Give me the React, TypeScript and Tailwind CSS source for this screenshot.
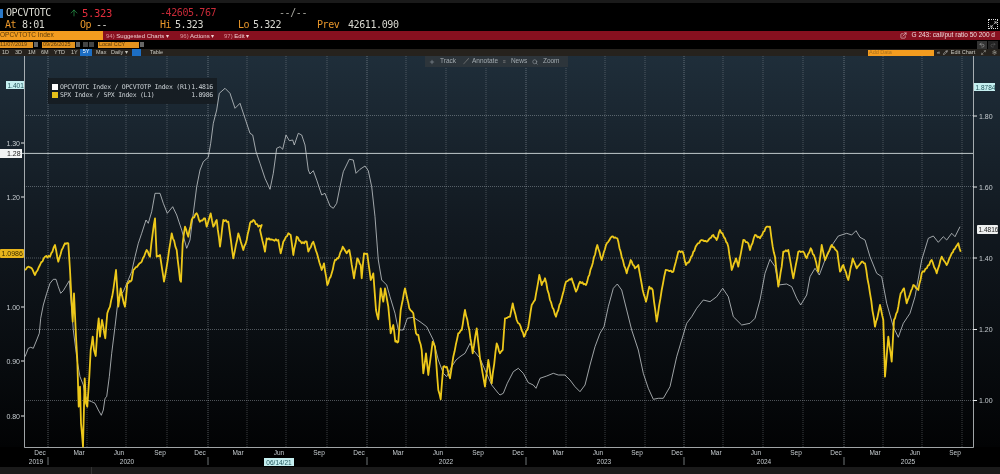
import { ArrowUp, Pencil, Settings, Undo2, Redo2, ExternalLink, Plus, Search, Maximize2 } from 'lucide-react';

type Trace = [number, number, number[]];

// traced in crops: [offset x, offset y, zoomed x/y pairs], zoom factor 3
const whiteTraces: Trace[] = [
  [0, 270, [75,260, 85,235, 92,232, 100,235, 110,210, 118,190, 122,145, 130,105, 140,70, 150,40, 160,28, 168,28, 175,50, 182,70, 190,62, 200,45, 208,32, 220,180, 232,275, 240,320, 250,345, 255,375, 262,390, 275,395, 285,400, 295,420, 304,436, 310,420, 315,385, 320,380, 328,320, 335,250, 345,170, 352,110, 358,80, 370,65]],
  [0, 80, [395,575, 405,530, 415,490, 425,460, 438,420, 445,430, 455,395, 465,340, 480,340, 490,370, 502,400, 518,380, 530,405, 545,450, 560,505, 570,480, 580,400, 590,320, 600,270, 610,245, 625,232, 632,190, 640,130, 650,90, 658,40, 675,25, 690,40, 705,85, 720,70, 735,115]],
  [250, 80, [0,160, 8,165, 18,215, 30,250, 45,295, 60,328, 70,280, 80,205, 90,200, 98,208, 108,165, 118,182, 128,180, 133,195, 145,160, 155,165, 165,195, 175,270, 180,282, 190,272, 200,300, 215,345, 225,340, 240,378, 250,385, 260,370, 270,320, 280,275, 298,238, 310,240, 318,280, 330,268, 345,258, 355,272, 365,320, 375,410]],
  [250, 230, [378,0, 385,90, 395,150, 410,165, 420,200, 435,250, 445,300, 460,300, 472,265, 490,262, 510,275, 530,290, 550,330, 565,390, 580,430, 590,440, 605,410, 618,390, 630,380, 645,370, 660,340, 670,360, 690,385, 705,420, 725,465, 745,490]],
  [500, 210, [0,555, 10,550, 22,520, 40,485, 55,475, 70,490, 85,518, 100,525, 108,535, 120,505, 140,498, 160,490, 175,495, 195,495, 210,510, 225,530, 240,545, 255,525, 270,465, 285,410, 300,370, 312,350, 325,290, 340,235, 352,222, 365,240, 380,300, 395,360, 415,420, 430,490, 445,535, 460,568, 475,565, 490,565, 510,530, 530,440, 545,390, 560,340, 575,320, 590,295, 610,270, 630,275, 650,260, 668,235, 685,260, 700,320, 725,345]],
  [750, 210, [0,340, 15,325, 30,270, 45,190, 60,148, 75,170, 85,225, 110,222, 125,230, 140,265, 152,285, 170,255, 180,200, 195,175, 208,195, 225,150, 250,100, 265,78, 290,70, 305,75, 318,62, 330,82, 345,90, 360,140, 380,190, 395,200, 410,280, 430,350, 445,382, 460,340, 480,310, 495,260, 515,150, 535,85, 550,78, 565,97, 580,80, 590,90, 605,70, 615,80, 630,50]],
];

const yellowTraces: Trace[] = [
  [0, 80, [75,570, 85,560, 95,565, 105,585, 120,555, 135,530, 150,530, 165,495, 175,545, 185,510, 195,490, 205,490, 210,570]],
  [0, 270, [215,100, 218,155, 222,70, 228,200, 232,270, 236,410, 240,350, 243,460, 249,530, 254,325, 258,400, 262,410, 268,320, 272,240, 278,200, 282,240, 287,258, 292,185, 296,145, 300,200, 306,150, 316,205, 322,130, 330,110, 340,60, 348,0, 355,110, 362,55, 368,85, 375,110, 382,40, 395,30, 400,0]],
  [0, 80, [415,555, 425,545, 440,510, 450,530, 458,460, 465,415, 470,530, 480,525, 490,590, 492,605, 500,560, 515,460, 530,510, 540,600, 543,605, 548,490, 555,440, 565,470, 575,420, 590,400, 600,425, 615,415, 620,440, 632,400, 640,440, 650,420, 660,500, 670,420, 685,425, 700,535, 715,460, 730,510, 740,480]],
  [250, 80, [0,430, 10,420, 25,440, 35,435]],
  [250, 230, [30,0, 45,65, 50,25, 70,30, 85,30, 92,70, 100,35, 115,10, 122,15, 130,75, 140,20, 155,40, 170,35, 175,65, 190,35, 205,85, 215,120, 222,100, 232,165, 245,130, 255,90, 265,85, 278,50, 290,70, 298,60, 312,145, 322,85, 332,105, 335,145, 342,70, 352,72, 362,150, 370,130, 378,240, 385,268, 392,175, 400,215, 405,175, 415,230, 422,310, 430,285, 436,335, 445,335, 452,240, 465,175, 478,235, 490,250, 498,310, 505,315, 515,360, 520,430, 528,370, 535,435, 548,335, 555,350, 565,480, 572,508, 580,410, 590,410, 600,445, 610,380, 625,310, 635,300, 645,240, 658,300, 668,370, 680,295, 690,385, 705,470, 715,390, 725,460, 740,340]],
  [500, 210, [0,430, 8,420, 15,325, 30,320, 38,280, 50,330, 62,350, 72,380, 85,350, 95,285, 105,270, 118,195, 125,225, 135,205, 150,270, 168,320, 185,265, 198,215, 215,205, 228,245, 240,215, 258,225, 275,170, 292,105, 305,150, 318,105, 335,80, 352,85, 365,140, 380,190, 392,150, 405,175, 415,165, 428,240, 438,275, 448,230, 458,240, 470,335, 485,240, 497,180, 520,185, 535,125, 548,125, 558,165, 570,150, 590,105, 605,90, 620,95, 640,75, 650,90, 660,60, 675,85, 685,110, 695,180, 708,145, 715,170, 730,90, 745,100]],
  [750, 210, [0,120, 15,75, 30,85, 50,50, 60,50, 68,110, 75,140, 85,230, 95,170, 100,125, 115,120, 130,205, 145,125, 160,125, 170,145, 182,115, 195,145, 205,185, 215,105, 225,150, 245,105, 262,125, 270,185, 280,165, 295,210, 308,145, 320,175, 335,155, 345,160, 360,250, 375,350, 385,310, 390,285, 400,330, 405,500, 415,380, 425,455, 432,330, 442,305, 452,250, 462,235, 470,280, 490,225, 505,240, 515,190, 530,175, 545,150, 560,190, 575,140, 590,165, 605,130, 625,100, 632,125]],
];

function toPoints(traces: Trace[]) {
  const pts: [number, number][] = [];
  traces.forEach(([ox, oy, d]) => {
    for (let i = 0; i < d.length; i += 2) pts.push([ox + d[i] / 3, oy + d[i + 1] / 3]);
  });
  return pts;
}

// small zigzag so the long straight bits look like daily prices
function roughen(pts: [number, number][], amp: number) {
  const out: [number, number][] = [];
  pts.forEach((p, i) => {
    out.push(p);
    const n = pts[i + 1];
    if (!n) return;
    const steps = Math.max(1, Math.round(Math.abs(n[0] - p[0]) / 1.2));
    for (let k = 1; k < steps; k++) {
      const t = k / steps;
      const off = Math.sin(i * 12.9898 + k * 78.233) * amp;
      out.push([p[0] + (n[0] - p[0]) * t, p[1] + (n[1] - p[1]) * t + off]);
    }
  });
  return out;
}

const pathOf = (pts: [number, number][]) => pts.map((p) => `${p[0].toFixed(1)},${p[1].toFixed(1)}`).join(' ');

const vGrid = [48, 87, 126, 167, 208, 247, 286, 327, 367, 406, 446, 486, 526, 566, 605, 645, 684, 723, 763, 803, 844, 883, 922, 962];
const yearLines = [48, 208, 367, 526, 684, 844];
const hGrid = [115.5, 186.5, 258, 329.5, 400.5];
const months = ['Dec', 'Mar', 'Jun', 'Sep'];
const monthX = [40, 79, 119, 160, 200, 238, 279, 319, 359, 398, 438, 478, 518, 558, 598, 637, 677, 716, 756, 796, 836, 875, 915, 955];
const years: [string, number][] = [['2019', 36], ['2020', 127], ['2022', 446], ['2023', 604], ['2024', 764], ['2025', 908]];
const leftLabels: [string, number][] = [['1.30', 143], ['1.20', 197], ['1.00', 307], ['0.90', 361], ['0.80', 416]];
const rightLabels: [string, number][] = [['1.80', 116], ['1.60', 187], ['1.40', 258], ['1.20', 329.5], ['1.00', 400.5]];
const ranges = [['1D', 'w-[13px]'], ['3D', 'w-[13px]'], ['1M', 'w-[13px]'], ['6M', 'w-[13px]'], ['YTD', 'w-[17px]'], ['1Y', 'w-[9px]']];

function Chart() {
  const white = toPoints(whiteTraces);
  const yellow = roughen(toPoints(yellowTraces), 0.8);
  return (
    <svg viewBox="0 56 1000 411" className="block w-[1000px] h-[411px] font-['Liberation_Sans',sans-serif]">
      <defs>
        <linearGradient id="plotBg" x1="0" y1="0" x2="0" y2="1">
          <stop offset="0" stopColor="#1f2e3a" />
          <stop offset="0.45" stopColor="#11181f" />
          <stop offset="1" stopColor="#020304" />
        </linearGradient>
      </defs>
      <rect x="0" y="56" width="1000" height="391" fill="url(#plotBg)" />
      <rect x="0" y="447" width="1000" height="20" fill="#000" />

      {hGrid.map((y) => (
        <line key={y} x1="24" x2="973" y1={y} y2={y} stroke="#aeb8be" strokeOpacity="0.55" strokeWidth="0.8" strokeDasharray="1 1" />
      ))}
      {vGrid.map((x) => (
        <line key={x} x1={x} x2={x} y1="56" y2="447" stroke="#aeb8be" strokeOpacity={yearLines.includes(x) ? 0.6 : 0.42} strokeWidth="0.8" strokeDasharray="1 1" />
      ))}

      {/* axes */}
      <path d="M24.5 56V447.5H973.5V56" fill="none" stroke="#c9ced1" strokeWidth="0.8" />
      <line x1="0" x2="973" y1="153.4" y2="153.4" stroke="#d5dcdf" strokeWidth="0.9" />

      <polyline points={pathOf(white)} fill="none" stroke="#c4c9cc" strokeWidth="0.8" strokeLinejoin="round" />
      <polyline points={pathOf(yellow)} fill="none" stroke="#edc81a" strokeWidth="1.8" strokeLinejoin="round" />

      {/* left scale */}
      {leftLabels.map(([t, y]) => (
        <g key={t}>
          <line x1="21" x2="24" y1={y} y2={y} stroke="#e5e7e8" strokeWidth="1" />
          <text x="20" y={y + 2.5} textAnchor="end" fontSize="7" fill="#c6ccd0">{t}</text>
        </g>
      ))}
      <rect x="6" y="81" width="18" height="8" fill="#c5eff0" />
      <text x="7.5" y="87.5" fontSize="6.5" fill="#24565c">1.401</text>
      <rect x="0" y="149" width="22" height="9" fill="#f2f4f4" />
      <text x="7" y="156" fontSize="7" fill="#222">1.28</text>
      <rect x="0" y="249" width="24" height="9" rx="1" fill="#e8b51c" />
      <text x="1.5" y="256" fontSize="7" fill="#3b2d00">1.0986</text>

      {/* right scale */}
      {rightLabels.map(([t, y]) => (
        <g key={t}>
          <line x1="973" x2="977" y1={y} y2={y} stroke="#e5e7e8" strokeWidth="1" />
          <text x="979" y={y + 2.5} fontSize="7" fill="#c6ccd0">{t}</text>
        </g>
      ))}
      <rect x="974" y="83" width="21" height="8" fill="#c5eff0" />
      <text x="975.5" y="89.5" fontSize="6.5" fill="#24565c">1.8784</text>
      <rect x="977" y="225" width="21" height="9" rx="1" fill="#eef0f0" />
      <text x="978.5" y="232" fontSize="6.5" fill="#222">1.4816</text>

      {/* time axis */}
      {monthX.map((x, i) => (
        <text key={x} x={x} y="455" textAnchor="middle" fontSize="6.5" fill="#c6ccd0">{months[i % 4]}</text>
      ))}
      {years.map(([t, x]) => (
        <text key={t} x={x} y="464" textAnchor="middle" fontSize="6.5" fill="#c6ccd0">{t}</text>
      ))}
      {yearLines.map((x) => (
        <line key={x} x1={x} x2={x} y1="457" y2="465" stroke="#8c9296" strokeWidth="0.8" />
      ))}
      <rect x="264" y="458" width="30" height="8" fill="#c5eff0" />
      <text x="279" y="464.5" textAnchor="middle" fontSize="6.5" fill="#24565c">06/14/21</text>
    </svg>
  );
}

export default function App() {
  return (
    <div className="w-[1000px] h-[474px] overflow-hidden bg-black flex flex-col blur-[0.3px]">
      <div className="h-[3px] bg-[#1a1a1a]" />

      {/* quote lines */}
      <div className="h-[28px] pt-[4px] relative font-['DejaVu_Sans_Mono',monospace] text-[10px] leading-[12px] tracking-[-0.4px] text-[#d8d8d0]">
        <div className="flex h-[12px] items-center">
          <div className="w-[3px] h-[9px] bg-[#2a78c8] mr-[3px]" />
          <span className="w-[66px]">OPCVTOTC</span>
          <ArrowUp size={10} strokeWidth={1.5} className="shrink-0 -ml-[3px] mr-[3px] text-[#2fae55]" />
          <span className="w-[78px] text-[10.5px] tracking-[-0.3px] text-[#e22d3c]">5.323</span>
          <span className="w-[119px] text-[#c72a38]">-42605.767</span>
          <span className="text-[#a8a8a0]">--/--</span>
        </div>
        <div className="flex h-[12px] items-center pl-[5px]">
          <span className="w-[17px] text-[#e8962a]">At</span>
          <span className="w-[58px]">8:01</span>
          <span className="w-[16px] text-[#e8962a]">Op</span>
          <span className="w-[64px]">--</span>
          <span className="w-[15px] text-[#e8962a]">Hi</span>
          <span className="w-[63px]">5.323</span>
          <span className="w-[15px] text-[#e8962a]">Lo</span>
          <span className="w-[64px]">5.322</span>
          <span className="w-[31px] text-[#e8962a]">Prev</span>
          <span>42611.090</span>
        </div>
        <div className="absolute right-[2px] top-[16px] w-[10px] h-[10px] border border-dotted border-[#ddd] flex items-center justify-center">
          <Maximize2 size={7} className="text-white" />
        </div>
      </div>

      {/* red command bar */}
      <div className="h-[9px] bg-[#87101f] flex items-center font-['Liberation_Sans',sans-serif] text-[6px] leading-none text-[#eecfd2]">
        <div className="w-[103px] h-full bg-[#f39c1f] text-[#5a3a08] text-[6.5px] flex items-center">OPCVTOTC Index</div>
        <span className="w-[74px] pl-[3px]"><span className="text-[#d9949c]">94)</span> Suggested Charts ▾</span>
        <span className="w-[44px] pl-[3px]"><span className="text-[#d9949c]">96)</span> Actions ▾</span>
        <span className="pl-[3px]"><span className="text-[#d9949c]">97)</span> Edit ▾</span>
        <div className="ml-auto flex items-center gap-[5px] pr-[5px] text-[6.5px] text-[#f0d8da]">
          <ExternalLink size={7} />
          <span>G 243: call/put ratio 50 200 d</span>
        </div>
      </div>

      {/* dates */}
      <div className="h-[9px] flex items-center gap-[1px] font-['Liberation_Sans',sans-serif] text-[5.5px] leading-none text-[#5a3a08]">
        <div className="w-[33px] h-[6px] bg-[#e3931f] flex items-center">11/07/2019</div>
        <div className="w-[4px] h-[5px] bg-[#666] mr-[3px]" />
        <div className="w-[33px] h-[6px] bg-[#e3931f] flex items-center pl-[1px]">09/26/2025</div>
        <div className="w-[4px] h-[5px] bg-[#666]" />
        <div className="w-[5px] h-[5px] bg-[#444] ml-[2px]" />
        <div className="w-[5px] h-[5px] bg-[#444] mr-[3px]" />
        <div className="w-[41px] h-[6px] bg-[#e3931f] flex items-center pl-[1px]">Local CCY</div>
        <div className="w-[4px] h-[5px] bg-[#666]" />
        <div className="ml-auto flex items-center gap-[1px] pr-[2px]">
          <div className="w-[10px] h-[8px] bg-[#333] flex items-center justify-center text-[#bbb]"><Undo2 size={6} /></div>
          <div className="w-[10px] h-[8px] bg-[#222] flex items-center justify-center text-[#666]"><Redo2 size={6} /></div>
        </div>
      </div>

      {/* range toolbar */}
      <div className="h-[7px] bg-[#26221d] flex items-center pl-[2px] font-['Liberation_Sans',sans-serif] text-[5.5px] leading-none text-[#c8c8c0]">
        {ranges.map(([t, w]) => (
          <span key={t} className={w}>{t}</span>
        ))}
        <span className="w-[12px] h-full bg-[#1c6ec4] text-white text-center mr-[4px]">5Y</span>
        <span className="w-[15px]">Max</span>
        <span className="w-[21px]">Daily ▾</span>
        <span className="w-[9px] h-full bg-[#1c6ec4] mr-[9px]" />
        <span>Table</span>
        <div className="ml-auto flex items-center">
          <div className="w-[66px] h-[6px] bg-[#f39c1f] text-[#a9701c] pl-[1px] flex items-center">Add Data</div>
          <span className="w-[9px] text-center">«</span>
          <Pencil size={5} className="text-white mr-[1px]" />
          <span className="w-[28px] text-center">Edit Chart</span>
          <Maximize2 size={5} className="ml-[4px] mr-[6px]" />
          <Settings size={5} className="mr-[3px]" />
        </div>
      </div>

      {/* plot, overlays sit on top of it */}
      <div className="relative h-[411px]">
        <Chart />

        <div className="absolute left-[425px] top-0 w-[143px] h-[11px] bg-[#2d353b] flex items-center gap-[5px] pl-[4px] font-['Liberation_Sans',sans-serif] text-[6.5px] leading-none text-[#a3abb0]">
          <Plus size={6} />
          <span className="w-[18px]">Track</span>
          <span className="text-[#888]">／</span>
          <span className="w-[26px] -ml-[3px]">Annotate</span>
          <span className="text-[5px] text-[#888]">≡</span>
          <span className="w-[16px]">News</span>
          <Search size={6} />
          <span>Zoom</span>
        </div>

        <div className="absolute left-[48px] top-[22px] w-[169px] h-[26px] bg-[#161d23] pt-[5px] pl-[4px] pr-[4px] font-['DejaVu_Sans_Mono',monospace] text-[6.5px] leading-[8px] tracking-[-0.28px] text-[#ccd2d6]">
          <div className="flex items-center">
            <div className="w-[6px] h-[6px] bg-white mr-[2px]" />
            <span>OPCVTOTC Index / OPCVTOTP Index (R1)</span>
            <span className="ml-auto">1.4816</span>
          </div>
          <div className="flex items-center">
            <div className="w-[6px] h-[6px] bg-[#e6c01a] mr-[2px]" />
            <span>SPX Index / SPX Index (L1)</span>
            <span className="ml-auto">1.0986</span>
          </div>
        </div>
      </div>

      <div className="flex-1 bg-[#1a1a1a] flex">
        <div className="w-[92px] border-r border-[#333]" />
      </div>
    </div>
  );
}
